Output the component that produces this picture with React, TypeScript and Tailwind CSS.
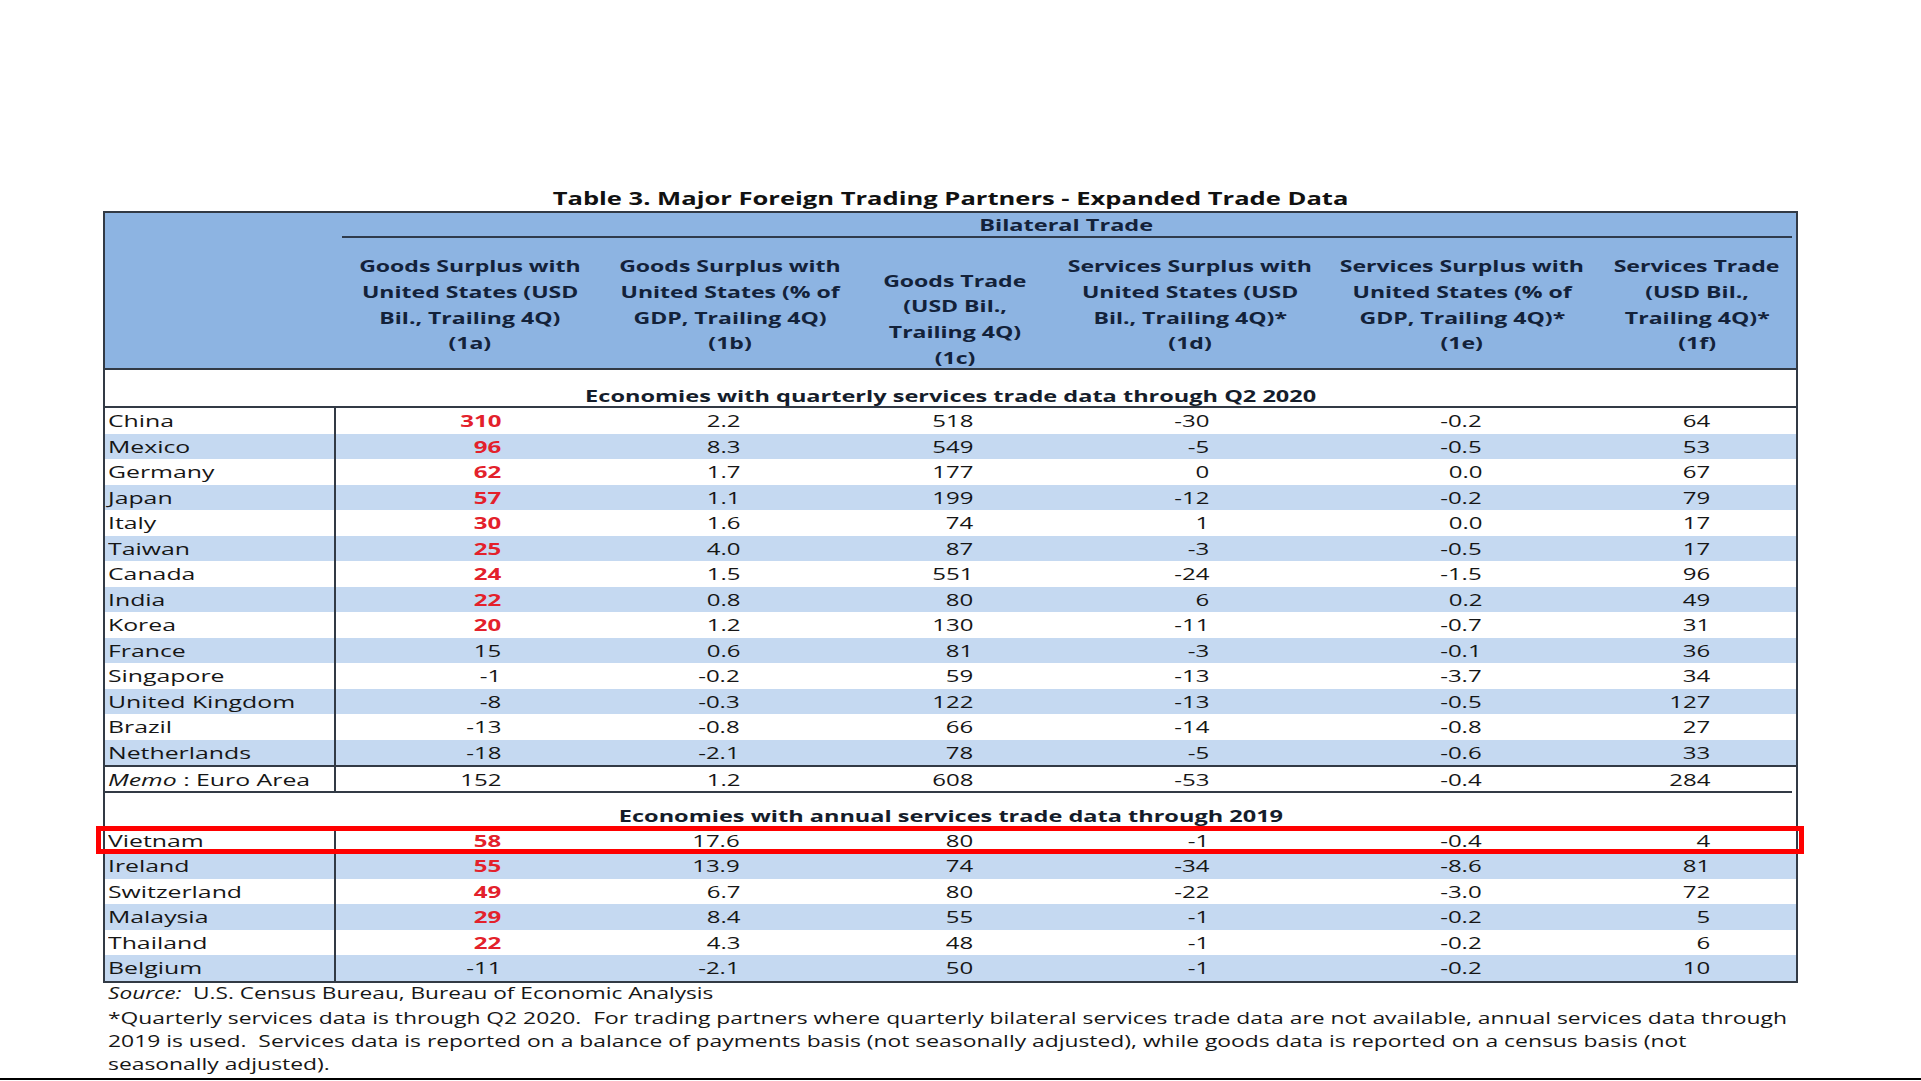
import React from 'react'

// Stretched spreadsheet screenshot: every text run is widened horizontally.

type Row = { name: string; v: string[]; red?: boolean }

const quarterly: Row[] = [
  { name: 'China', v: ['310', '2.2', '518', '-30', '-0.2', '64'], red: true },
  { name: 'Mexico', v: ['96', '8.3', '549', '-5', '-0.5', '53'], red: true },
  { name: 'Germany', v: ['62', '1.7', '177', '0', '0.0', '67'], red: true },
  { name: 'Japan', v: ['57', '1.1', '199', '-12', '-0.2', '79'], red: true },
  { name: 'Italy', v: ['30', '1.6', '74', '1', '0.0', '17'], red: true },
  { name: 'Taiwan', v: ['25', '4.0', '87', '-3', '-0.5', '17'], red: true },
  { name: 'Canada', v: ['24', '1.5', '551', '-24', '-1.5', '96'], red: true },
  { name: 'India', v: ['22', '0.8', '80', '6', '0.2', '49'], red: true },
  { name: 'Korea', v: ['20', '1.2', '130', '-11', '-0.7', '31'], red: true },
  { name: 'France', v: ['15', '0.6', '81', '-3', '-0.1', '36'] },
  { name: 'Singapore', v: ['-1', '-0.2', '59', '-13', '-3.7', '34'] },
  { name: 'United Kingdom', v: ['-8', '-0.3', '122', '-13', '-0.5', '127'] },
  { name: 'Brazil', v: ['-13', '-0.8', '66', '-14', '-0.8', '27'] },
  { name: 'Netherlands', v: ['-18', '-2.1', '78', '-5', '-0.6', '33'] },
]

const memo = ['152', '1.2', '608', '-53', '-0.4', '284']

const annual: Row[] = [
  { name: 'Vietnam', v: ['58', '17.6', '80', '-1', '-0.4', '4'], red: true },
  { name: 'Ireland', v: ['55', '13.9', '74', '-34', '-8.6', '81'], red: true },
  { name: 'Switzerland', v: ['49', '6.7', '80', '-22', '-3.0', '72'], red: true },
  { name: 'Malaysia', v: ['29', '8.4', '55', '-1', '-0.2', '5'], red: true },
  { name: 'Thailand', v: ['22', '4.3', '48', '-1', '-0.2', '6'], red: true },
  { name: 'Belgium', v: ['-11', '-2.1', '50', '-1', '-0.2', '10'] },
]

// widths keep header centres on the reference; right padding puts the numbers' right edge
const cols = [
  { w: 'w-[268px]', pr: 'pr-[103px]' },
  { w: 'w-[252px]', pr: 'pr-[116px]' },
  { w: 'w-[198px]', pr: 'pr-[81px]' },
  { w: 'w-[272px]', pr: 'pr-[117px]' },
  { w: 'w-[272px]', pr: 'pr-[116px]' },
  { w: 'w-[198px]', pr: 'pr-[86px]' },
]

const heads = [
  ['Goods Surplus with', 'United States (USD', 'Bil., Trailing 4Q)', '(1a)'],
  ['Goods Surplus with', 'United States (% of', 'GDP, Trailing 4Q)', '(1b)'],
  ['Goods Trade', '(USD Bil.,', 'Trailing 4Q)', '(1c)'],
  ['Services Surplus with', 'United States (USD', 'Bil., Trailing 4Q)*', '(1d)'],
  ['Services Surplus with', 'United States (% of', 'GDP, Trailing 4Q)*', '(1e)'],
  ['Services Trade', '(USD Bil.,', 'Trailing 4Q)*', '(1f)'],
]

function Cells({ v, red }: { v: string[]; red?: boolean }) {
  return (
    <>
      {v.map((x, i) => (
        <div key={i} className={`${cols[i].w} ${cols[i].pr} flex items-center justify-end pt-[1px]`}>
          <span
            className={
              i === 0 && red
                ? 'inline-block origin-right scale-x-[1.5] font-bold text-[#e3212b]'
                : 'inline-block origin-right scale-x-[1.5]'
            }
          >
            {x}
          </span>
        </div>
      ))}
    </>
  )
}

function DataRow({ row, stripe, children }: { row: Row; stripe: boolean; children?: React.ReactNode }) {
  return (
    <div className={`relative flex h-[25.5px] leading-[20px] ${stripe ? 'bg-[#c5d9f1]' : 'bg-white'}`}>
      <div className="flex w-[231px] items-center border-r-2 border-[#323a45] pl-[3px] pt-[1px]">
        <span className="inline-block origin-left scale-x-[1.55] whitespace-nowrap">{row.name}</span>
      </div>
      <Cells v={row.v} red={row.red} />
      {children}
    </div>
  )
}

function SectionTitle({ text }: { text: string }) {
  return (
    <span className="inline-block origin-center scale-x-[1.47] whitespace-nowrap font-bold text-[#151d2b]">
      {text}
    </span>
  )
}

export default function App() {
  return (
    <div className="flex h-[1081px] w-[1921px] flex-col bg-white font-['Open_Sans',sans-serif] text-[16px] text-[#161616]">
      <div className="ml-[103px] mt-[185px] flex h-[26px] w-[1695px] items-center justify-center">
        <span className="inline-block origin-center scale-x-[1.46] whitespace-nowrap text-[17.5px] font-bold text-[#111]">
          Table 3. Major Foreign Trading Partners - Expanded Trade Data
        </span>
      </div>

      <div className="ml-[103px] w-[1695px] border-2 border-[#323a45]">
        {/* header */}
        <div className="flex border-b-2 border-[#323a45] bg-[#8db4e2] font-bold text-[#13223a]">
          <div className="w-[231px]" />
          <div className="flex flex-1 flex-col">
            <div className="flex h-[23px] items-center justify-center pt-[1px] leading-[20px]">
              <span className="inline-block origin-center scale-x-[1.47] whitespace-nowrap">Bilateral Trade</span>
            </div>
            <div className="ml-[6px] mr-[4px] h-[2px] bg-[#2f3b4c]" />
            <div className="flex h-[130px] overflow-hidden">
              {heads.map((lines, i) => (
                <div key={i} className={`${cols[i].w} flex items-center justify-center`}>
                  <div className={i === 2 ? 'mt-[34px] leading-[25.6px]' : 'mt-[5px] leading-[25.6px]'}>
                    {lines.map((l) => (
                      <div key={l} className="text-center">
                        <span className="inline-block origin-center scale-x-[1.44] whitespace-nowrap">{l}</span>
                      </div>
                    ))}
                  </div>
                </div>
              ))}
            </div>
          </div>
        </div>

        <div className="flex h-[38px] items-end justify-center border-b-2 border-[#323a45] leading-[20px]">
          <SectionTitle text="Economies with quarterly services trade data through Q2 2020" />
        </div>

        {quarterly.map((r, i) => (
          <DataRow key={r.name} row={r} stripe={i % 2 === 1} />
        ))}

        <div className="flex h-[26px] border-t-2 border-[#323a45] bg-white leading-[20px]">
          <div className="flex w-[231px] items-center border-r-2 border-[#323a45] pl-[3px] pt-[1px]">
            <span className="inline-block origin-left scale-x-[1.55] whitespace-nowrap">
              <i>Memo</i> : Euro Area
            </span>
          </div>
          <Cells v={memo} />
        </div>
        <div className="mr-[4px] h-[2px] bg-[#323a45]" />

        <div className="flex h-[34.5px] items-end justify-center pb-[2px] leading-[20px]">
          <SectionTitle text="Economies with annual services trade data through 2019" />
        </div>

        {annual.map((r, i) => (
          <DataRow key={r.name} row={r} stripe={i % 2 === 1}>
            {i === 0 && (
              <div className="pointer-events-none absolute -bottom-[1px] -left-[9px] -right-[8px] -top-[2px] z-10 border-[5px] border-[#ff0000]" />
            )}
          </DataRow>
        ))}
      </div>

      <div className="ml-[108px] h-[19px] pt-[1px] leading-[18px]">
        <span className="inline-block origin-left scale-x-[1.414] whitespace-pre">
          <i>Source:</i>  U.S. Census Bureau, Bureau of Economic Analysis
        </span>
      </div>

      <div className="ml-[108px] mt-[5px] leading-[23px]">
        <div>
          <span className="inline-block origin-left scale-x-[1.428] whitespace-pre">
            *Quarterly services data is through Q2 2020.  For trading partners where quarterly bilateral services trade data are not available, annual services data through
          </span>
        </div>
        <div>
          <span className="inline-block origin-left scale-x-[1.428] whitespace-pre">
            2019 is used.  Services data is reported on a balance of payments basis (not seasonally adjusted), while goods data is reported on a census basis (not
          </span>
        </div>
        <div>
          <span className="inline-block origin-left scale-x-[1.428] whitespace-pre">seasonally adjusted).</span>
        </div>
      </div>

      <div className="flex-1" />
      <div className="mb-[1px] h-[2px] w-full bg-black" />
    </div>
  )
}
